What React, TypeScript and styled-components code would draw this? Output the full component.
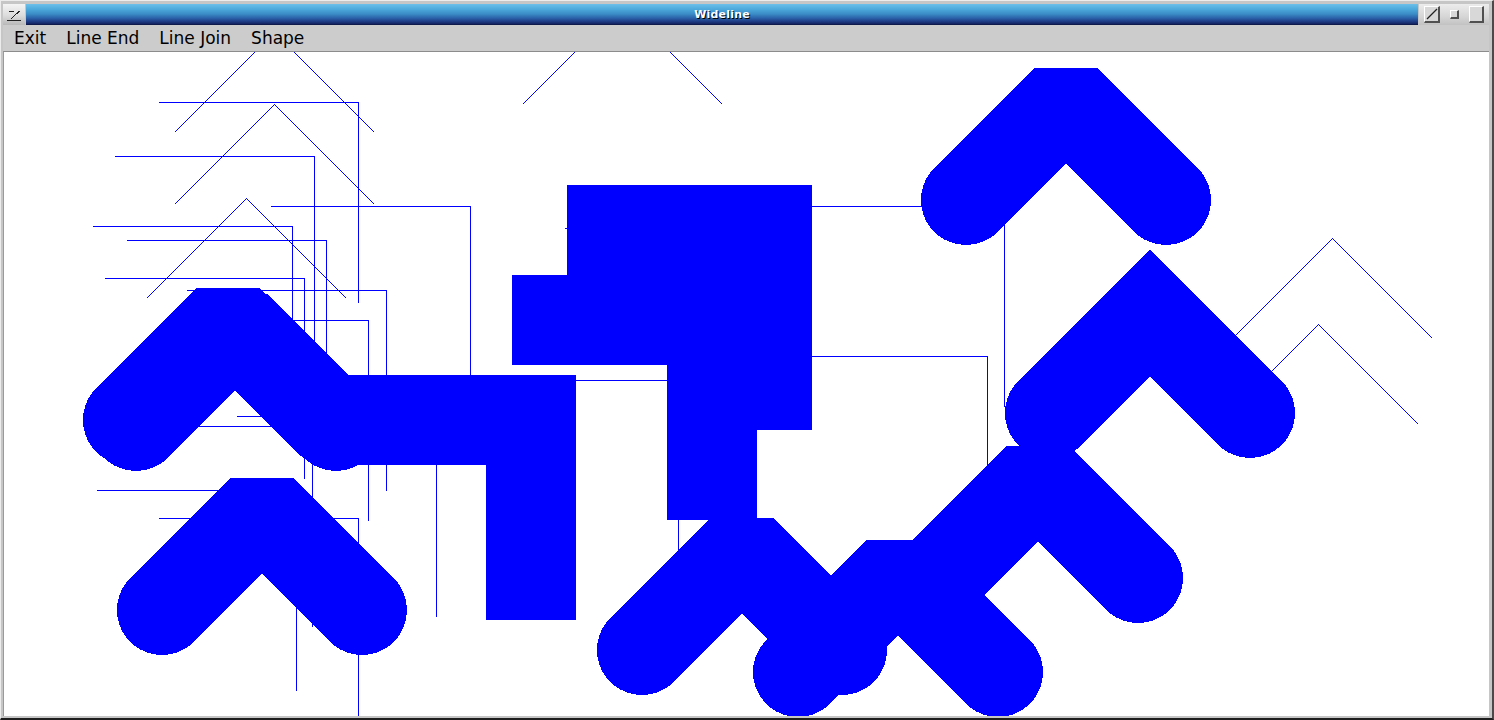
import React, { FC, ReactElement } from 'react';
import styled, { createGlobalStyle } from 'styled-components';

const GlobalStyle = createGlobalStyle`
html, body {
  margin: 0;
  padding: 0;
  background: #c6c6c6;
}
body {
  font-family: "DejaVu Sans", "Liberation Sans", sans-serif;
}
`;

const Frame = styled.div`
box-sizing: border-box;
width: 1494px;
height: 720px;
display: flex;
flex-direction: column;
background: #c6c6c6;
border-top: 1px solid #ececec;
border-left: 1px solid #ececec;
border-right: 2px solid #4a4a4a;
border-bottom: 2px solid #1e1e1e;
padding: 3px 3px 2px 2px;
`;

const TitleRow = styled.div`
display: flex;
height: 21px;
gap: 1px;
`;

const MenuButton = styled.div`
width: 22px;
display: flex;
align-items: center;
justify-content: center;
background: linear-gradient(to bottom, #f4f4f4 0%, #dcdcdc 55%, #b8b8b8 100%);
`;

const TitleBar = styled.div`
flex: 1;
display: flex;
align-items: center;
justify-content: center;
background: linear-gradient(to bottom, #6cc0ea 0%, #4eaadc 25%, #3a8cc6 50%, #2a5ea6 72%, #1d3a84 88%, #13225e 100%);
border-bottom: 1px solid #0e1a4c;
`;

const TitleText = styled.span`
color: #ffffff;
font-family: "DejaVu Sans", sans-serif;
font-weight: bold;
font-size: 11px;
text-shadow: 1px 1px 0 #000000;
letter-spacing: 0.2px;
`;

const WindowButtons = styled.div`
width: 70px;
box-sizing: border-box;
padding: 0 5px;
display: flex;
align-items: center;
justify-content: space-between;
background: linear-gradient(to bottom, #ececec 0%, #d6d6d6 60%, #c2c2c2 100%);
`;

const WinButton = styled.div<{ $w: number; $h: number }>`
box-sizing: border-box;
width: ${p => p.$w}px;
height: ${p => p.$h}px;
border-top: 1px solid #ffffff;
border-left: 1px solid #ffffff;
border-right: 2px solid #505050;
border-bottom: 2px solid #505050;
background: #d8d8d8;
display: flex;
align-items: center;
justify-content: center;
`;

const MenuBar = styled.div`
height: 26px;
display: flex;
align-items: center;
padding-left: 1px;
background: #cccccc;
`;

const MenuItem = styled.span`
padding: 0 10px;
font-family: "DejaVu Sans", sans-serif;
font-size: 17px;
color: #000000;
`;

const Canvas = styled.div`
flex: 1;
background: #ffffff;
border-top: 1px solid #8c8c8c;
border-left: 1px solid #9a9a9a;
overflow: hidden;
`;

const Drawing = styled.svg`
display: block;
`;

const ThinLine = styled.polyline`
fill: none;
stroke: #0000ff;
stroke-width: 1;
`;

const WideLine = styled.polyline<{ $join: string; $cap: string }>`
fill: none;
stroke: #0000ff;
stroke-width: 90;
stroke-linejoin: ${p => p.$join};
stroke-linecap: ${p => p.$cap};
stroke-miterlimit: 10;
`;

type Pt = [number, number];

// chevrons: (x-100,y+100) (x,y) (x+100,y+100)
const chev = (x: number, y: number): Pt[] => [[x - 100, y + 100], [x, y], [x + 100, y + 100]];
// corners: (x-200,y) (x,y) (x,y+200)
const corner = (x: number, y: number): Pt[] => [[x - 200, y], [x, y], [x, y + 200]];

const pts = (p: Pt[]) => p.map(([x, y]) => `${x},${y}`).join(' ');

const thin: Pt[][] = [
    chev(274, 32),
    chev(274, 104),
    chev(246, 198),
    chev(622, 4),
    chev(1332, 238),
    chev(1318, 324),
    corner(358, 102),
    corner(314, 156),
    corner(470, 206),
    corner(292, 226),
    corner(326, 240),
    corner(304, 278),
    corner(386, 290),
    corner(368, 320),
    corner(436, 416),
    corner(312, 426),
    corner(296, 490),
    corner(358, 518),
    corner(764, 228),
    corner(678, 380),
    corner(1004, 206),
    corner(987, 356),
];

const wide: { p: Pt[]; join: string; cap: string }[] = [
    { p: chev(228, 320), join: 'bevel', cap: 'round' },
    { p: chev(236, 326), join: 'bevel', cap: 'round' },
    { p: chev(262, 510), join: 'bevel', cap: 'round' },
    { p: chev(1066, 100), join: 'bevel', cap: 'round' },
    { p: chev(1150, 313), join: 'miter', cap: 'round' },
    { p: chev(742, 550), join: 'bevel', cap: 'round' },
    { p: chev(898, 572), join: 'bevel', cap: 'round' },
    { p: chev(1038, 478), join: 'bevel', cap: 'round' },
    { p: corner(531, 420), join: 'miter', cap: 'butt' },
    { p: corner(712, 320), join: 'miter', cap: 'butt' },
    { p: corner(767, 230), join: 'miter', cap: 'butt' },
];

const menus = ['Exit', 'Line End', 'Line Join', 'Shape'];

const App: FC = (): ReactElement => {
    return (
        <>
            <GlobalStyle />
            <Frame>
                <TitleRow>
                    <MenuButton>
                        <svg width="16" height="14" viewBox="0 0 16 14" shapeRendering="crispEdges">
                            <path d="M2.5 3.5 H7.5 M13.5 3 L5 11 M1 12.5 H15" stroke="#222" strokeWidth="1" fill="none" />
                        </svg>
                    </MenuButton>
                    <TitleBar>
                        <TitleText>Wideline</TitleText>
                    </TitleBar>
                    <WindowButtons>
                        <WinButton $w={16} $h={17}>
                            <svg width="12" height="12" viewBox="0 0 12 12">
                                <path d="M1 11 L11 1" stroke="#222" strokeWidth="1.3" />
                            </svg>
                        </WinButton>
                        <WinButton $w={9} $h={9} />
                        <WinButton $w={15} $h={17} />
                    </WindowButtons>
                </TitleRow>
                <MenuBar>
                    {menus.map(m => (
                        <MenuItem key={m}>{m}</MenuItem>
                    ))}
                </MenuBar>
                <Canvas>
                    <Drawing width="1485" height="664" viewBox="4 52 1485 664" shapeRendering="crispEdges">
                        <g transform="translate(0.5 0.5)">
                            {thin.map((p, i) => (
                                <ThinLine key={i} points={pts(p)} />
                            ))}
                        </g>
                        {wide.map((s, i) => (
                            <WideLine key={i} points={pts(s.p)} $join={s.join} $cap={s.cap} />
                        ))}
                    </Drawing>
                </Canvas>
            </Frame>
        </>
    );
};

export default App;
